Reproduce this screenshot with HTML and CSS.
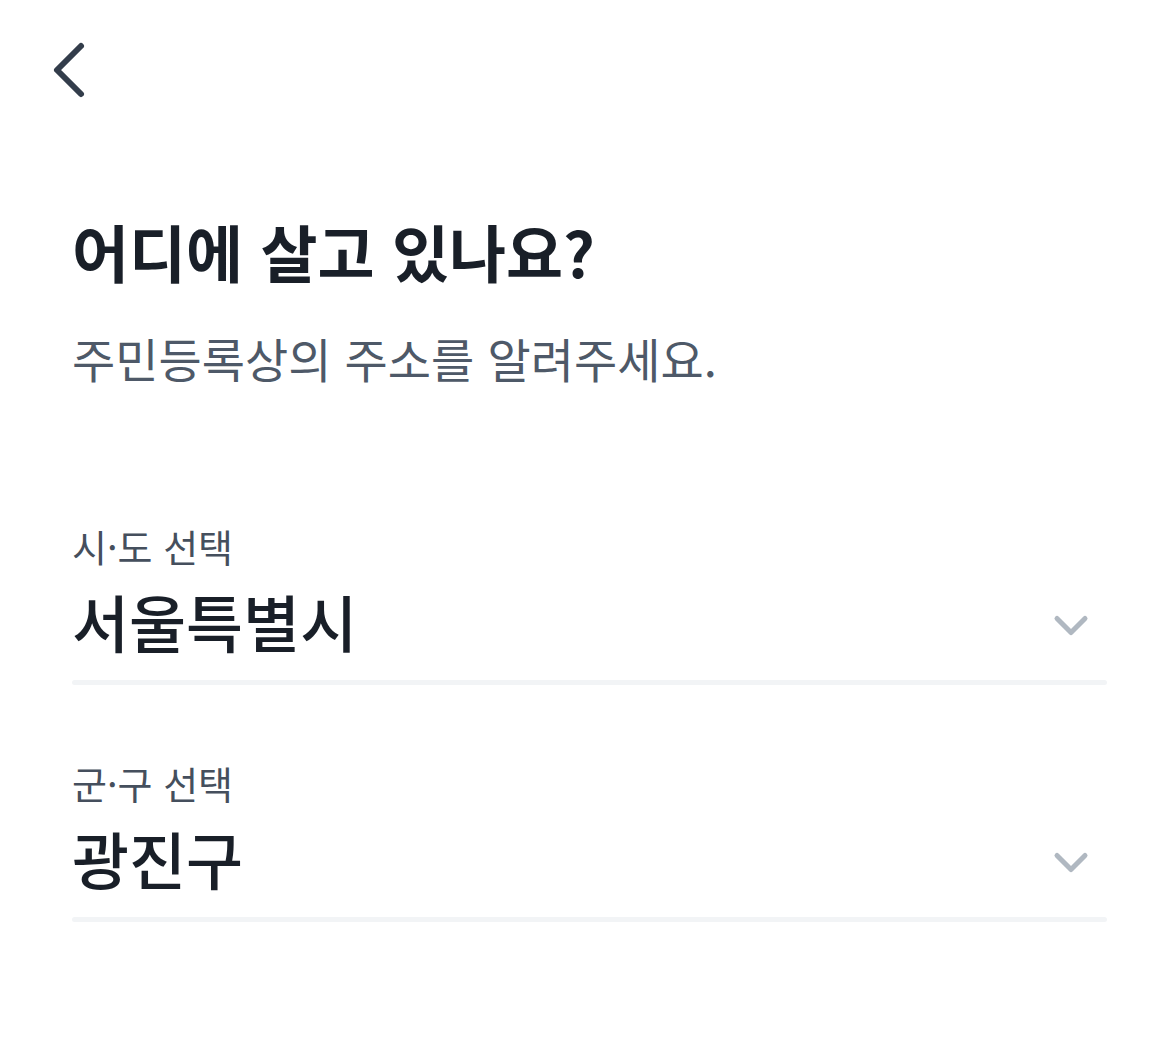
FILE: index.html
```html
<!DOCTYPE html>
<html lang="ko">
<head>
<meta charset="UTF-8" />
<meta name="viewport" content="width=device-width, initial-scale=1.0"/>
<title>주소 입력</title>
<link rel="stylesheet" href="styles.css">
</head>
<body>

<div class="top-bar">
  <button class="back-btn" aria-label="뒤로">
    <svg width="40" height="60" viewBox="0 0 40 60">
      <path d="M33 6 L9 30 L33 54" fill="none" stroke="#333d4b" stroke-width="6" stroke-linecap="round" stroke-linejoin="round"/>
    </svg>
  </button>
</div>

<div class="content">
  <h1 class="title">어디에 살고 있나요?</h1>
  <p class="subtitle">주민등록상의 주소를 알려주세요.</p>

  <div class="field">
    <div class="field-label">시·도 선택</div>
    <div class="field-row">
      <span class="field-value">서울특별시</span>
      <svg class="chevron" width="40" height="26" viewBox="0 0 40 26">
        <path d="M6 5.5 L20 19.5 L34 5.5" fill="none" stroke="#b0b8c1" stroke-width="5" stroke-linecap="round" stroke-linejoin="round"/>
      </svg>
    </div>
    <div class="field-line"></div>
  </div>

  <div class="field">
    <div class="field-label">군·구 선택</div>
    <div class="field-row">
      <span class="field-value">광진구</span>
      <svg class="chevron" width="40" height="26" viewBox="0 0 40 26">
        <path d="M6 5.5 L20 19.5 L34 5.5" fill="none" stroke="#b0b8c1" stroke-width="5" stroke-linecap="round" stroke-linejoin="round"/>
      </svg>
    </div>
    <div class="field-line"></div>
  </div>
</div>

</body>
</html>
```

FILE: styles.css
```css
body {
  margin: 0;
  font-family: "Noto Sans CJK KR", "Noto Sans", sans-serif;
  background: #fff;
  color: #191f28;
}
.top-bar {
  height: 140px;
  padding-left: 48px;
  padding-top: 40px;
  box-sizing: border-box;
}
.back-btn {
  background: none;
  border: none;
  padding: 0;
  display: block;
}
.content {
  padding: 0 68px 0 72px;
}
.title {
  margin: 69px 0 0;
  font-size: 62px;
  font-weight: 700;
  line-height: 84px;
  color: #191f28;
}
.subtitle {
  margin: 33px 0 0;
  font-size: 47px;
  font-weight: 400;
  line-height: 64px;
  color: #4e5968;
}
.field {
  margin-top: 131px;
}
.field + .field {
  margin-top: 73px;
}
.field-label {
  font-size: 38px;
  line-height: 50px;
  color: #454f5d;
}
.field-row {
  display: flex;
  align-items: center;
  justify-content: space-between;
  height: 86px;
  margin-top: 7px;
}
.field-value {
  font-size: 62px;
  font-weight: 500;
  line-height: 86px;
  color: #191f28;
}
.chevron {
  margin: 9px 16px 0 0;
}
.field-line {
  height: 5px;
  border-radius: 3px;
  background: #f2f4f6;
  margin-top: 16px;
}
```
